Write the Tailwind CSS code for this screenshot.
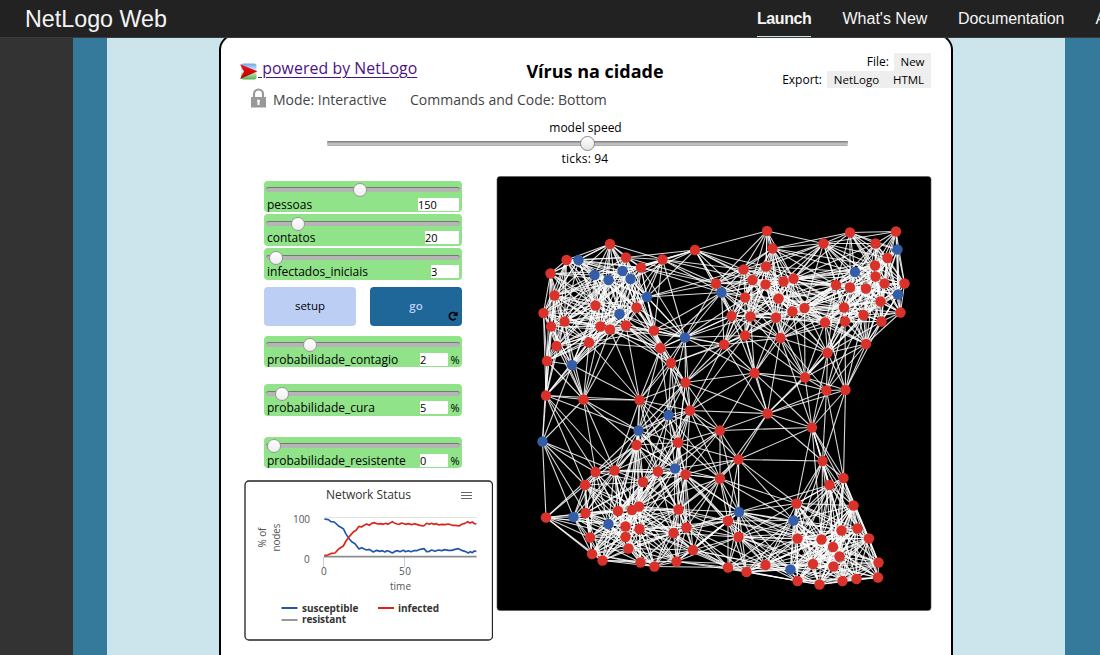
<!DOCTYPE html>
<html lang="pt">
<head>
<meta charset="utf-8">
<title>NetLogo Web</title>
<script src="https://cdn.jsdelivr.net/npm/@tailwindcss/browser@4"></script>
</head>
<body class="flex h-[655px] w-[1100px] flex-col overflow-hidden bg-[#cce4eb] font-['Open_Sans','Noto_Sans',sans-serif] text-black">
<header class="z-10 flex h-[38px] w-[1100px] shrink-0 items-start overflow-hidden border-b border-[#3a3a3a] bg-[#222] font-['Liberation_Sans',Arial,sans-serif] text-white">
  <div class="ml-[25px] w-[732px] shrink-0 text-[23.3px] leading-[38px] whitespace-nowrap text-[#f4f4f4]"><span>NetLogo Web</span></div>
  <nav class="flex shrink-0 gap-[31.500px] text-[16px] leading-[37px] whitespace-nowrap text-[#f4f4f4]">
    <a class="h-[38px] w-[54px] border-b-2 border-[#cce4eb] font-bold tracking-[-0.4px]">Launch</a>
    <a class="w-[84px]">What's New</a>
    <a class="w-[106px] tracking-[-0.1px]">Documentation</a>
    <a>About</a>
  </nav>
</header>
<main class="flex h-[617px] shrink-0">
  <div class="w-[73px] shrink-0 bg-[#333]"></div>
  <div class="w-[34px] shrink-0 bg-[#357a9b]"></div>
  <div class="flex w-[958px] shrink-0 pl-[112px]">
    <section class="-mt-[4px] h-[621px] w-[734px] shrink-0 rounded-t-[16px] border-2 border-b-0 border-black bg-white">
      <div class="flex h-[138px] flex-col">
        <div class="flex h-[51px] items-start pt-[14px]">
          <div class="ml-[18px] flex w-[285px] shrink-0 items-start">
            <svg class="mt-[12px] h-[19px] w-[20px] shrink-0" viewBox="0 0 20 19">
              <defs><linearGradient id="sky" x1="0" y1="0" x2="0" y2="1"><stop offset="0" stop-color="#6fa8ea"/><stop offset=".5" stop-color="#e4f1fb"/><stop offset=".55" stop-color="#cfeacb"/><stop offset="1" stop-color="#4fb04f"/></linearGradient>
              <linearGradient id="dart" x1="0" y1="0" x2="0" y2="1"><stop offset="0" stop-color="#f01010"/><stop offset="1" stop-color="#b80000"/></linearGradient></defs>
              <rect x="2" y="1.500" width="15.500" height="16" rx="2.500" fill="url(#sky)"/>
              <path d="M1 2.300 18.500 9.300 1 17 5 9.500Z" fill="url(#dart)"/>
            </svg>
            <a class="-ml-[1px] text-[15.8px] leading-[36px] tracking-[0.1px] whitespace-pre text-[#4b1187] underline underline-offset-[3px]"> powered by NetLogo</a>
          </div>
          <h1 class="mt-[6.500px] w-[142px] shrink-0 text-center text-[18px] leading-[28px] font-bold whitespace-nowrap">Vírus na cidade</h1>
          <div class="mt-[3px] mr-[20px] ml-auto flex flex-col items-end text-[11.5px] leading-[17.5px]">
            <div class="flex h-[17.500px] items-center"><span class="mr-[5px] text-[12px]">File:</span><span class="w-[37px] bg-[#eee] text-center">New</span></div>
            <div class="flex h-[18px] items-center"><span class="mr-[5px] text-[12px]">Export:</span><span class="w-[59px] bg-[#eee] text-center">NetLogo</span><span class="w-[45px] bg-[#eee] text-center">HTML</span></div>
          </div>
        </div>
        <div class="flex h-[24px] items-center pl-[29px] text-[14px] text-[#444]">
          <svg class="-mt-[2px] h-[20px] w-[17px]" viewBox="0 0 17 20"><path d="M4 10V6a4.500 4.500 0 0 1 9 0v4" fill="none" stroke="#999" stroke-width="2.200"/><rect x="1" y="9" width="15" height="10.500" fill="#999"/><path d="M8.500 11.500a1.500 1.500 0 0 1 1 2.600V17h-2v-2.900a1.500 1.500 0 0 1 1-2.600Z" fill="#fff"/></svg>
          <span class="ml-[6px] w-[137px] whitespace-nowrap">Mode: Interactive</span>
          <span class="whitespace-nowrap">Commands and Code: Bottom</span>
        </div>
        <div class="mt-[9px] ml-[2px] flex flex-col items-center text-[12px]">
          <span class="mr-[3px] leading-[16px]">model speed</span>
          <div class="flex h-[15px] w-[521px] items-center justify-center rounded-full bg-[linear-gradient(#0000_5px,#858585_5px,#858585_6px,#bcbcbc_7px,#c4c4c4_9px,#999_10px,#0000_10px)]"><span class="size-[15px] rounded-full border border-[#888] bg-linear-to-b from-white to-[#e4e4e4]"></span></div>
          <span class="mr-[4px] leading-[16px] tracking-[0.2px]">ticks: 94</span>
        </div>
      </div>
      <div class="flex">
        <div class="ml-[23px] flex w-[249px] shrink-0 flex-col">
          <div id="controls" class="ml-[20px] flex h-[294px] w-[198px] flex-col pt-[6.500px]"></div>
          <svg class="mt-[12px] h-[161px] w-[249px] shrink-0" viewBox="244 480 249 161" font-family="Open Sans, Noto Sans, sans-serif" fill="#333">
            <rect x="245" y="481" width="247.500" height="159" rx="4" fill="#fff" stroke="#222" stroke-width="1.300"/>
            <text x="326" y="498.800" font-size="12" textLength="85">Network Status</text>
            <path d="M461 492.500h11M461 495.500h11M461 498.500h11" stroke="#666" stroke-width="1.200"/>
            <path d="M324 517.500h153" stroke="#e2e2e2"/><path d="M323.500 557v10M404.500 557v10" stroke="#c6cfe8"/>
            <g font-size="10" fill="#555"><text x="293" y="523" textLength="17">100</text><text x="304" y="562.500">0</text><text x="321" y="575">0</text><text x="399" y="575" textLength="12">50</text><text x="390" y="589.500" textLength="21">time</text><text transform="translate(266 547.500) rotate(-90)" textLength="20">% of</text><text transform="translate(280 551.500) rotate(-90)" textLength="28">nodes</text></g>
            <g transform="translate(235 472) scale(.33333)" fill="none" stroke-width="5" stroke-linejoin="round"><path d="M267 254H725" stroke="#8d8d8d"/>
            <path stroke="#2354a9" d="M268 141L280 143 288 149 298 150 312 163 325 170 332 184 340 197 350 209 360 215 372 231 380 227 388 231 395 234 403 232 415 240 425 235 435 238 442 236 450 240 456 236 462 238 472 243 482 237 488 236 495 239 505 235 512 239 520 236 528 239 536 236 545 236 556 232 567 230 575 239 583 238 590 234 600 238 610 234 620 236 630 233 640 235 650 235 660 232 670 230 680 235 690 238 700 243 706 239 712 242 718 237 724 238"/>
            <path stroke="#d9251c" d="M268 251L278 249 290 244 300 243 312 230 325 222 333 207 340 197 348 188 355 180 364 174 372 163 380 165 385 161 395 156 403 160 410 154 418 152 428 156 438 155 445 157 452 154 458 157 464 154 472 149 480 154 486 156 493 157 500 153 512 157 520 155 530 158 538 155 545 157 555 160 566 162 575 154 583 157 590 154 596 157 604 155 612 159 620 157 630 158 640 156 652 160 662 160 672 162 682 156 690 154 698 149 705 153 712 150 718 155 724 156"/></g>
            <g font-size="10" font-weight="700"><path d="M281.500 608h16" stroke="#2354a9" stroke-width="2"/><text x="302" y="611.500" textLength="56.500">susceptible</text><path d="M378 608h16" stroke="#d9251c" stroke-width="2"/><text x="398" y="611.500" textLength="41">infected</text><path d="M281.500 620h16" stroke="#999" stroke-width="2"/><text x="302" y="623" textLength="44">resistant</text></g>
          </svg>
        </div>
        <svg id="world" class="mt-[1px] ml-[3px] h-[436px] w-[436px] shrink-0" viewBox="496 175 436 436"></svg>
      </div>
    </section>
  </div>
  <div class="w-[35px] shrink-0 bg-[#357a9b]"></div>
</main>
<script>
const sliders = [
  ['pessoas', 95, '150', 418, 0, 0], ['contatos', 33, '20', 425, 0, 2], ['infectados_iniciais', 11, '3', 431, 0, 2.5],
  null,
  ['probabilidade_contagio', 45, '2', 420, 1, 0], ['probabilidade_cura', 17.5, '5', 420, 1, 17], ['probabilidade_resistente', 9, '0', 420, 1, 21]
];
document.getElementById('controls').innerHTML = sliders.map(s => !s
  ? `<div class="mt-[7px] mb-[10px] flex h-[39px] shrink-0 justify-between text-[11.5px]"><div class="flex w-[92px] items-center justify-center rounded-[4px] bg-[#bccef4]">setup</div><div class="relative flex w-[92px] items-center justify-center rounded-[4px] bg-[#1f6798] font-semibold text-[#bccef4]">go<svg class="absolute right-[4px] bottom-[5px] size-[10px]" viewBox="0 0 11 11"><path d="M8.300 2.900A4 4 0 1 0 8.500 8.300" fill="none" stroke="#000" stroke-width="1.800"/><path d="M10.500.500V5.500H5.500Z"/></svg></div></div>`
  : `<div class="flex h-[31.500px] shrink-0 flex-col rounded-[4px] bg-[#90e388] text-[12px]" style="margin-top:${s[5]}px">
      <div class="relative mx-[2px] mt-[6.500px] h-[5px] w-[194px] shrink-0 rounded-full border-t border-[#777] bg-[#b5b5b5]"><span class="absolute top-[-5px] size-[14px] rounded-full border border-[#999] bg-linear-to-b from-white to-[#eee]" style="left:${s[1] - 8.5}px"></span></div>
      <div class="mt-[5.500px] flex h-[13px] items-center pl-[3px] leading-[13px]"><span class="whitespace-nowrap">${s[0]}</span><span class="ml-auto bg-white text-[11px] leading-[13px]" style="width:${(s[4] ? 448 : 458.5) - s[3]}px">${s[2]}</span><span class="${s[4] ? 'w-[14px] pl-[2.500px] text-[11px]' : 'w-[3.500px]'}">${s[4] ? '%' : ''}</span></div>
    </div>`).join('');

const infected = [610,244,566.5,260,626,257.5,641,267.500,662.5,259.500,695,250,550.5,273.500,554.5,295.500,543.5,313,595.5,305.500,636.5,307.500,551,326.500,564.5,321.500,600.5,326.500,610,329.500,626,325.500,654,330.500,556.5,346,589,342.500,660.5,348,547,361,671,363,685.5,382.500,
767,231,850,232.500,896,231.500,823.5,243.500,875.5,243.500,772.5,248.500,887.5,258,875,265.500,766,266.500,743.5,269.500,875.5,276.500,752.5,280,765.5,284.500,783.5,281.500,793.5,278.500,836,285,850,287.500,866,288.500,884.5,283.500,904.5,283.500,716,283.500,745,297.500,778.5,298.500,880.5,301.500,844,307.500,804.5,308,792.5,311.500,900.5,312.500,863.5,315,731.5,316,750.5,316.500,776,317.500,825,322.500,845,321.500,881.5,321.500,745,335.500,780.5,338,724,344.500,827.5,353,866,344,754.5,373,805,377.500,
546,395.500,583.5,399.500,639.5,400,690,410.500,636.5,445,678,442.500,595.5,472,614.5,470.500,658,471.500,685.5,474.500,643,482,585,485,546,517.500,585.5,513,618,511,632,510,639,506.500,678.5,509.500,625.5,526.500,639.5,529,673.5,533,686.5,527.500,590,537.500,625.5,537,628.5,548.500,693,550,592,554,602.5,560.500,640.5,562.500,654.5,566.500,676.5,561.500,
826.5,390.500,845.5,390,767.5,413.500,720,430.500,812,427.500,738.5,459.500,822.5,461,720,478.500,843.5,478,829.5,485,796.5,503.500,853.5,505.500,728,521,738.5,537,841.5,530.500,857.5,528.500,797.5,538.500,821.5,539.500,869,538.500,833,547,839.5,556.500,878.5,562.500,878,577.500,813,564,833.5,566.500,842.5,581,856.5,579,819.5,584.500,797.5,581,765.5,565,746.5,572,728,567.500];
const susceptible = [578.5,260,594.5,275,608.5,280,622.5,271,630.5,279,647,297,619.5,314,685,337.500,572,365,897.5,249.500,855,272,898,294.500,721.5,292.500,668.5,415,638.5,430.500,542.5,441.500,675,468.500,573.5,517,608.5,524,739,512,793.5,520.500,790.5,569.500];
const nodes = [];
for (const [list, color] of [[infected, '#d9322b'], [susceptible, '#345da9']])
  for (let i = 0; i < list.length; i += 2) nodes.push({x: list[i], y: list[i + 1], color});

const home = nodes.map(n => ({x: 714 + (n.x - 714) * 1.1, y: 398 + (n.y - 398) * 1.1}));
for (let step = 0; step < 25; step++)
  for (const a of home) for (const b of home) {
    const dx = a.x - b.x, dy = a.y - b.y, d = Math.hypot(dx, dy);
    if (a === b || d > 27) continue;
    const push = (27 - d) * 0.12 / (d || 1);
    a.x = Math.max(508, Math.min(920, a.x + dx * push)); b.x = Math.max(508, Math.min(920, b.x - dx * push));
    a.y = Math.max(188, Math.min(600, a.y + dy * push)); b.y = Math.max(188, Math.min(600, b.y - dy * push));
  }
let seed = 94;
const rnd = () => { seed = (seed * 1664525 + 1013904223) % 4294967296; return seed / 4294967296; };
const near = home.map((a, i) => home.map((b, j) => j).filter(j => j !== i).sort((p, q) => Math.hypot(home[p].x - a.x, home[p].y - a.y) - Math.hypot(home[q].x - a.x, home[q].y - a.y)));
const linked = new Set();
let path = '';
while (linked.size < nodes.length * 10) {
  const i = Math.floor(rnd() * nodes.length);
  const j = near[i].find(k => !linked.has(Math.min(i, k) * 1000 + Math.max(i, k)));
  linked.add(Math.min(i, j) * 1000 + Math.max(i, j));
  path += `<path d="M${nodes[i].x} ${nodes[i].y}L${nodes[j].x} ${nodes[j].y}"/>`;
}
document.getElementById('world').innerHTML = `<rect x="497" y="176.500" width="434" height="434" rx="3" fill="#000" stroke="#555" stroke-width=".6"/><g stroke="#fff" stroke-opacity=".85" stroke-width="1.100">${path}</g>` + nodes.map(n => `<circle cx="${n.x}" cy="${n.y}" r="5.200" fill="${n.color}"/>`).join('');
</script>
</body>
</html>
